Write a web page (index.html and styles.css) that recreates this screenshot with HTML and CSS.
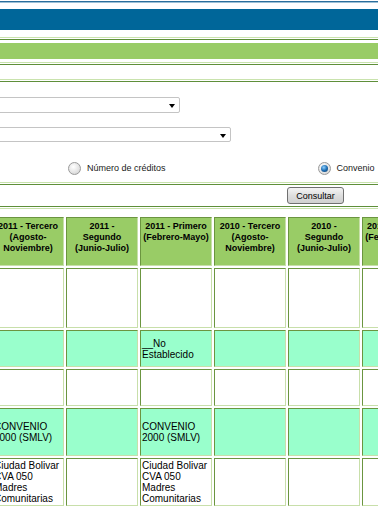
FILE: index.html
```html
<!DOCTYPE html>
<html lang="es">
    <head>
        <meta charset="UTF-8" />
        <meta name="viewport" content="width=device-width, initial-scale=1.0" />
        <title>Consulta</title>
        <link rel="stylesheet" href="styles.css">
    </head>
    <body>
        <div class="top-line"></div>
        <div class="banner"></div>
        <div class="rule rule-a"></div>
        <div class="bar"></div>
        <div class="rule rule-b"></div>
        <div class="crumbs"></div>
        <div class="rule"></div>

        <div class="filters">
            <div class="select-box select-short">
                <select><option></option></select>
            </div>
            <div class="select-box select-long">
                <select><option></option></select>
            </div>
            <div class="radio-row">
                <label class="radio-item">
                    <span class="radio"></span>
                    Número de créditos
                </label>
                <label class="radio-item">
                    <span class="radio checked"></span>
                    Convenio
                </label>
            </div>
        </div>

        <div class="rule"></div>
        <div class="actions">
            <button class="btn">Consultar</button>
        </div>
        <div class="rule rule-flip"></div>

        <table class="grid">
            <tr class="head">
                <th>2011 - Tercero<br>(Agosto-<br>Noviembre)</th>
                <th>2011 -<br>Segundo<br>(Junio-Julio)</th>
                <th>2011 - Primero<br>(Febrero-Mayo)</th>
                <th>2010 - Tercero<br>(Agosto-<br>Noviembre)</th>
                <th>2010 -<br>Segundo<br>(Junio-Julio)</th>
                <th>2010 - Primero<br>(Febrero-Mayo)</th>
            </tr>
            <tr class="row-tall">
                <td></td><td></td><td></td><td></td><td></td><td></td>
            </tr>
            <tr class="row-alt">
                <td></td><td></td><td>__No<br>Establecido</td><td></td><td></td><td></td>
            </tr>
            <tr class="row-plain">
                <td></td><td></td><td></td><td></td><td></td><td></td>
            </tr>
            <tr class="row-alt row-mid">
                <td>CONVENIO<br>2000 (SMLV)</td><td></td><td>CONVENIO<br>2000 (SMLV)</td><td></td><td></td><td></td>
            </tr>
            <tr class="row-last">
                <td>Ciudad Bolivar<br>CVA 050<br>Madres<br>Comunitarias</td><td></td><td>Ciudad Bolivar<br>CVA 050<br>Madres<br>Comunitarias</td><td></td><td></td><td></td>
            </tr>
        </table>
    </body>
</html>
```

FILE: styles.css
```css
body {
    margin: 0;
    width: 378px;
    overflow: hidden;
    font-family: "Liberation Sans", Arial, sans-serif;
    font-size: 9px;
    background-color: #ffffff;
    color: #000000;
}
.top-line {
    margin-top: 1px;
    border-top: 1px solid #2a6e9c;
    border-bottom: 1px solid #9cc0d6;
}
.banner {
    margin-top: 6px;
    height: 21px;
    background-color: #006699;
}
.rule {
    height: 1px;
    border-top: 1px solid #c9e3ad;
    border-bottom: 1px solid #5f8f3a;
}
.rule-a {
    margin-top: 7px;
}
.bar {
    margin-top: 3px;
    height: 16px;
    background-color: #99cc66;
}
.rule-b {
    margin-top: 3px;
}
.crumbs {
    height: 14px;
}
.filters {
    height: 100px;
    padding-top: 15px;
    box-sizing: border-box;
    display: flex;
    flex-direction: column;
}
.select-box {
    position: relative;
    height: 16px;
    margin-left: -20px;
}
.select-box select {
    appearance: none;
    width: 100%;
    height: 100%;
    border: 1px solid #c4c4c4;
    border-radius: 2px;
    background-color: #ffffff;
}
.select-box::after {
    content: "";
    position: absolute;
    right: 5px;
    top: 7px;
    border-left: 3px solid transparent;
    border-right: 3px solid transparent;
    border-top: 4px solid #000000;
}
.select-short {
    width: 200px;
}
.select-long {
    width: 251px;
    margin-top: 14px;
    height: 15px;
}
.radio-row {
    display: flex;
    height: 12px;
    margin-top: 20px;
    padding-left: 68px;
    color: #1a1a1a;
}
.radio-item {
    display: flex;
    align-items: center;
    gap: 6px;
    white-space: nowrap;
}
.radio-item + .radio-item {
    margin-left: 152px;
}
.radio {
    width: 11px;
    height: 11px;
    border-radius: 50%;
    border: 1px solid #9a9a9a;
    background: radial-gradient(circle at 40% 35%, #ffffff 0%, #e2e2e2 60%, #c8c8c8 100%);
    position: relative;
}
.radio.checked::after {
    content: "";
    position: absolute;
    left: 2px;
    top: 2px;
    width: 7px;
    height: 7px;
    border-radius: 50%;
    background: radial-gradient(circle at 40% 35%, #8fd0ff 0%, #1f6fb4 50%, #0b3560 100%);
}
.actions {
    display: flex;
    height: 21px;
    align-items: center;
    padding-left: 287px;
}
.btn {
    height: 17px;
    width: 57px;
    padding: 0;
    font-family: "Liberation Sans", Arial, sans-serif;
    font-size: 9px;
    color: #000000;
    border: 1px solid #707070;
    border-radius: 3px;
    background: linear-gradient(#f4f4f4, #dedede 50%, #d0d0d0);
}
.rule-flip {
    border-top-color: #5f8f3a;
    border-bottom-color: #c9e3ad;
}
.grid {
    margin-top: 6px;
    margin-left: -10px;
    width: 446px;
    table-layout: fixed;
    border-collapse: separate;
    border-spacing: 2px;
    line-height: 11px;
}
.grid th,
.grid td {
    width: 68px;
    padding: 1px;
    border: 1px solid;
    border-color: #6b9540 #c8dfaa #c8dfaa #6b9540;
}
.grid th {
    padding-top: 3px;
    vertical-align: top;
    background-color: #99cc66;
    font-weight: bold;
    text-align: center;
}
.grid td {
    font-size: 10px;
    text-align: left;
    vertical-align: middle;
}
.head {
    height: 49px;
}
.row-tall {
    height: 60px;
}
.row-alt td {
    background-color: #99ffcc;
}
.row-alt,
.row-plain {
    height: 37px;
}
.row-mid {
    height: 48px;
}
.row-last td {
    vertical-align: top;
}
```
